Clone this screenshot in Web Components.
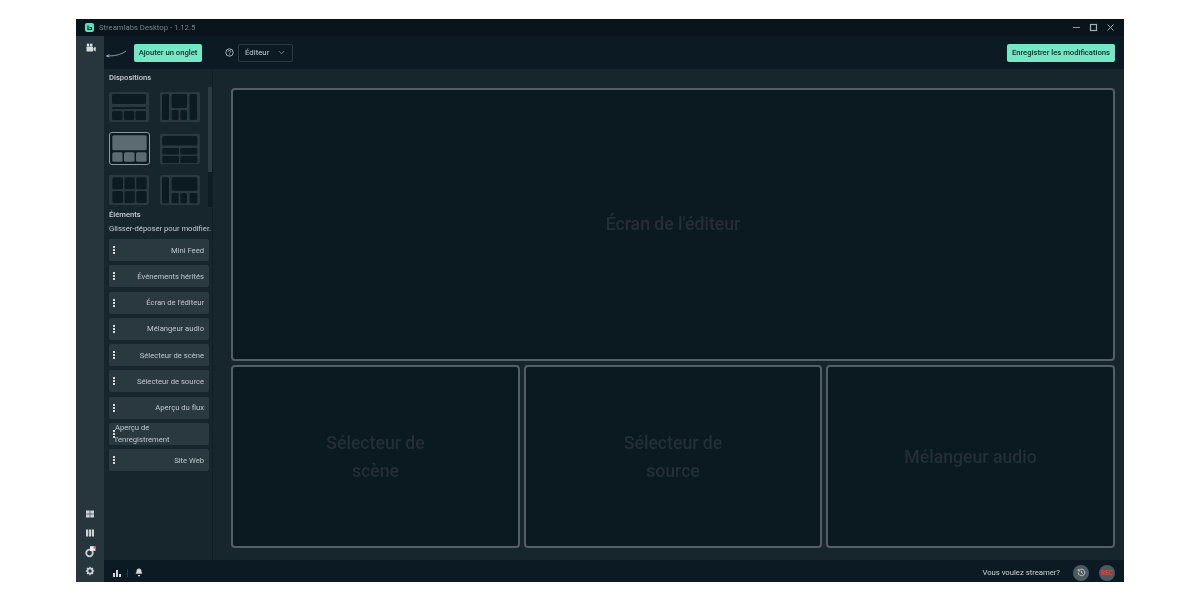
<!DOCTYPE html>
<html lang="fr">
<head>
<meta charset="utf-8">
<title>Streamlabs Desktop</title>
<style>
  html, body { margin: 0; background: #fff; }
  body { height: 600px; overflow: hidden; font-family: Roboto, "Liberation Sans", sans-serif; }
</style>
</head>
<body>
<app-window>
  <title-bar slot="title"></title-bar>
  <side-nav slot="nav"></side-nav>
  <editor-toolbar slot="toolbar"></editor-toolbar>
  <layout-panel slot="panel">
    <layout-thumb cells="3,2,34,10;3,15,34,2;3,19,10.500,9;14.800,19,10.500,9;26.500,19,10.500,9"></layout-thumb>
    <layout-thumb cells="2,2,7,26;11.600,2,15.400,14;29.600,2,7.400,26;11.600,18,7,10;20.400,18,6.600,10"></layout-thumb>
    <layout-thumb selected cells="3.300,3.300,34.400,15;3.300,20.300,10.300,9.500;15,20.300,10.600,9.500;27,20.300,10.600,9.500"></layout-thumb>
    <layout-thumb middle cells="2.300,2,35,9.500;2.300,14,16.700,6.500;20.300,14,17,6.500;2.300,22,16.700,7;20.300,22,17,7"></layout-thumb>
    <layout-thumb cells="3.400,2.300,10.600,12;15.500,2.300,10.300,12;27.300,2.300,10.300,12;3.400,16,10.600,12;15.500,16,10.300,12;27.300,16,10.300,12"></layout-thumb>
    <layout-thumb cells="2,2.300,7,26;11.600,2.300,25.700,13.500;11.600,18,7,10.300;20.400,18,6.600,10.300;29.600,18,7.700,10.300"></layout-thumb>
    <element-row slot="rows">Mini Feed</element-row>
    <element-row slot="rows">Événements hérités</element-row>
    <element-row slot="rows">Écran de l'éditeur</element-row>
    <element-row slot="rows">Mélangeur audio</element-row>
    <element-row slot="rows">Sélecteur de scène</element-row>
    <element-row slot="rows">Sélecteur de source</element-row>
    <element-row slot="rows">Aperçu du flux</element-row>
    <element-row slot="rows" wrap>Aperçu de l'enregistrement</element-row>
    <element-row slot="rows">Site Web</element-row>
  </layout-panel>
  <editor-grid slot="main">
    <editor-slot style="grid-column: 1 / 4">Écran de l'éditeur</editor-slot>
    <editor-slot narrow>Sélecteur de scène</editor-slot>
    <editor-slot narrow>Sélecteur de source</editor-slot>
    <editor-slot>Mélangeur audio</editor-slot>
  </editor-grid>
  <status-bar slot="status"></status-bar>
</app-window>

<script>
// petit helper: chaque composant pose son html dans un shadow root ouvert
class Base extends HTMLElement {
  constructor() {
    super();
    this.attachShadow({ mode: 'open' });
  }
  connectedCallback() {
    this.shadowRoot.innerHTML = this.render();
  }
}

class AppWindow extends Base {
  render() {
    return `
      <style>
        :host { display: block; padding: 19px 76px 18px; height: 563px; }
        .win {
          height: 563px; display: grid;
          grid-template-columns: 28px 109px 1fr;
          grid-template-rows: 17px 33px 491px 22px;
          grid-template-areas: "t t t" "n b b" "n p m" "n s s";
          background: #17252d;
          filter: blur(.35px); /* la capture est un peu floue, et le texte reste gris */
        }
        ::slotted([slot=title]) { grid-area: t; }
        ::slotted([slot=nav]) { grid-area: n; }
        ::slotted([slot=toolbar]) { grid-area: b; }
        ::slotted([slot=panel]) { grid-area: p; }
        ::slotted([slot=main]) { grid-area: m; }
        ::slotted([slot=status]) { grid-area: s; }
      </style>
      <div class="win">
        <slot name="title"></slot><slot name="nav"></slot><slot name="toolbar"></slot>
        <slot name="panel"></slot><slot name="main"></slot><slot name="status"></slot>
      </div>`;
  }
}

class TitleBar extends Base {
  render() {
    return `
      <style>
        :host { display: flex; align-items: center; background: #09141b; color: #75838a; font-size: 7.700px; padding: 0 9px; }
        .logo { width: 9px; height: 9px; margin-right: 5px; }
        .name { flex: 1; }
        .ctl { display: flex; gap: 8px; }
        svg { display: block; }
      </style>
      <svg class="logo" viewBox="0 0 9 9"><rect width="9" height="9" rx="2" fill="#5fe0bd"/><path d="M3 2.500v4h3.500v-2H4.500" fill="none" stroke="#0c1a21" stroke-width="1.100"/></svg>
      <span class="name">Streamlabs Desktop - 1.12.5</span>
      <div class="ctl">
        <svg width="9" height="9" viewBox="0 0 9 9"><path d="M1 4.500h7" stroke="#8b979d"/></svg>
        <svg width="9" height="9" viewBox="0 0 9 9"><rect x="1.500" y="1.500" width="6" height="6" fill="none" stroke="#a3aeb3" stroke-width="1.200"/></svg>
        <svg width="9" height="9" viewBox="0 0 9 9"><path d="M1.500 1.500l6 6M7.500 1.500l-6 6" stroke="#a3aeb3"/></svg>
      </div>`;
  }
}

class SideNav extends Base {
  render() {
    return `
      <style>
        :host { display: flex; flex-direction: column; justify-content: space-between; align-items: center; background: #27353d; padding: 7px 0 6px; box-sizing: border-box; }
        .low { display: flex; flex-direction: column; align-items: center; gap: 9px; }
        svg { display: block; width: 10px; height: 10px; }
      </style>
      <svg viewBox="0 0 10 10" style="margin-left:1px"><g fill="#d5dcdf"><circle cx="2" cy="2" r="1.400"/><circle cx="5.200" cy="2" r="1.400"/><rect x="0.500" y="3.600" width="6.500" height="5" rx=".6"/><path d="M7.500 5l2.200-1.200v4.600L7.500 7.200z"/></g></svg>
      <div class="low">
        <svg viewBox="0 0 10 10"><g fill="#c9d1d5"><rect x="1" y="1.500" width="3.700" height="3.200"/><rect x="5.300" y="1.500" width="3.700" height="3.200"/><rect x="1" y="5.300" width="3.700" height="3.200"/><rect x="5.300" y="5.300" width="3.700" height="3.200"/></g></svg>
        <svg viewBox="0 0 10 10"><g fill="#c9d1d5"><rect x="1" y="1.500" width="2.200" height="7"/><rect x="3.900" y="1.500" width="2.200" height="7"/><rect x="6.800" y="1.500" width="2.200" height="7"/></g></svg>
        <svg viewBox="0 0 10 10" style="overflow:visible"><circle cx="4.500" cy="6" r="3.300" fill="none" stroke="#c9d1d5" stroke-width="1.800"/><rect x="5" y="-.8" width="5.500" height="4.600" fill="#eceff0"/><rect x="8.800" y="-.8" width="1.700" height="2.400" fill="#d8434c"/></svg>
        <svg viewBox="0 0 10 10"><circle cx="5" cy="5" r="2.600" fill="none" stroke="#c9d1d5" stroke-width="1.800"/><path d="M5 .8v1.400M5 7.800v1.400M.8 5h1.400M7.800 5h1.400M2 2l1 1M7 7l1 1M8 2L7 3M3 7L2 8" stroke="#c9d1d5" stroke-width="1.200"/></svg>
      </div>`;
  }
}

class EditorToolbar extends Base {
  render() {
    return `
      <style>
        :host { display: flex; align-items: center; background: #0c1b23; padding: 0 9px 0 1px; }
        .arrow { width: 22px; height: 12px; margin-right: 7px; flex: none; margin-top: 2px; }
        .btn { background: #74e8c5; color: #0e2a2a; font-size: 7.650px; font-weight: 500; height: 18px; line-height: 18px; border-radius: 2px; padding: 0 5px; white-space: nowrap; }
        .add { width: 68px; padding: 0; text-align: center; }
        .help { margin: 0 4px 0 23px; width: 9px; height: 9px; display: block; }
        .select { width: 55px; height: 18px; box-sizing: border-box; border: 1px solid #2b3a42; border-radius: 2px; color: #c3ced3; font-size: 7.800px; display: flex; align-items: center; justify-content: space-between; padding: 0 7px 0 6px; }
        .sp { flex: 1; }
      </style>
      <svg class="arrow" viewBox="0 0 22 12"><path d="M21 3C16 7 9 8 1.500 8M1.500 8l3-1.500M1.500 8l3 1" fill="none" stroke="#aab6bb" stroke-width=".8"/></svg>
      <div class="btn add">Ajouter un onglet</div>
      <svg class="help" viewBox="0 0 9 9"><circle cx="4.500" cy="4.500" r="3.700" fill="none" stroke="#b6c1c6" stroke-width=".9"/><path d="M3.300 3.600a1.200 1.200 0 1 1 1.600 1.100c-.3.2-.4.3-.4.7M4.500 6.300v.6" fill="none" stroke="#b6c1c6" stroke-width=".8"/></svg>
      <div class="select"><span>Éditeur</span><svg width="7" height="5" viewBox="0 0 7 5"><path d="M.8 1l2.700 2.800L6.200 1" fill="none" stroke="#7f8d93" stroke-width=".8"/></svg></div>
      <div class="sp"></div>
      <div class="btn">Enregistrer les modifications</div>`;
  }
}

class LayoutPanel extends Base {
  render() {
    return `
      <style>
        :host { display: flex; flex-direction: column; box-sizing: border-box; position: relative; border-right: 1px solid #101e26; padding: 0 3px 0 5px; color: #c5d0d5; font-size: 7.650px; min-height: 0; }
        h3 { margin: 0; font: 500 7.600px/10px Roboto, "Liberation Sans", sans-serif; color: #c5d0d5; }
        .head { padding-top: 4px; height: 18px; box-sizing: border-box; }
        .thumbs { display: grid; grid-template-columns: 41px 40px; column-gap: 10px; row-gap: 10px; height: 120px; padding-top: 5px; box-sizing: border-box; align-content: start; }
        .elems { padding-top: 3px; height: 32px; box-sizing: border-box; }
        p { margin: 3px 0 0; line-height: 12px; white-space: nowrap; color: #c0cbd0; }
        .rows { display: flex; flex-direction: column; gap: 4.300px; }
        .track { position: absolute; right: 0; top: 18px; width: 4px; height: 120px; background: #0e1c24; }
        .thumb { position: absolute; left: 0; top: 0; width: 4px; height: 85px; background: #2d3b43; }
      </style>
      <div class="head"><h3>Dispositions</h3></div>
      <div class="thumbs"><slot></slot></div>
      <div class="track"><div class="thumb"></div></div>
      <div class="elems"><h3>Éléments</h3><p>Glisser-déposer pour modifier.</p></div>
      <div class="rows"><slot name="rows"></slot></div>`;
  }
}

class LayoutThumb extends Base {
  render() {
    const sel = this.hasAttribute('selected');
    const w = sel ? 41 : 40;
    const h = sel ? 33 : 30;
    const cells = (this.getAttribute('cells') || '').split(';').map(c => {
      const [x, y, cw, ch] = c.split(',');
      return `<rect x="${x}" y="${y}" width="${cw}" height="${ch}" rx="1.500" fill="${sel ? '#5c6b72' : '#0c1a21'}"/>`;
    }).join('');
    const frame = sel
      ? `<rect x=".5" y=".5" width="${w - 1}" height="${h - 1}" rx="2.500" fill="#0c1a21" stroke="#8d999e"/>`
      : `<rect width="${w}" height="${h}" rx="2" fill="#2a3840"/>`;
    return `
      <style>
        :host { display: block; width: ${w}px; height: ${h}px; align-self: ${this.hasAttribute('middle') ? 'center' : 'start'}; }
        svg { display: block; }
      </style>
      <svg width="${w}" height="${h}" viewBox="0 0 ${w} ${h}">${frame}${cells}</svg>`;
  }
}

class ElementRow extends Base {
  render() {
    const wrap = this.hasAttribute('wrap');
    return `
      <style>
        :host { display: flex; align-items: center; height: 22px; box-sizing: border-box; background: #2a3840; border-radius: 2px; padding: 0 5px 0 4px; font-size: 7.650px; color: #bcc8cd; }
        .dots { width: 3px; flex: none; display: flex; flex-direction: column; gap: 1px; }
        i { display: block; width: 2.400px; height: 2px; background: #d4dcdf; }
        .txt { flex: 1; text-align: right; white-space: nowrap; }
        .wrap { text-align: left; white-space: normal; line-height: 12px; margin-left: -1px; }
      </style>
      <div class="dots"><i></i><i></i><i></i></div>
      <div class="txt ${wrap ? 'wrap' : ''}"><slot></slot></div>`;
  }
}

class EditorGrid extends Base {
  render() {
    return `
      <style>
        :host { display: grid; grid-template-columns: 289px 298px 289px; grid-template-rows: 273.500px 183px; gap: 4px; padding: 18.500px 9px 12px 18px; box-sizing: border-box; min-width: 0; }
      </style>
      <slot></slot>`;
  }
}

class EditorSlot extends Base {
  render() {
    return `
      <style>
        :host { display: flex; align-items: center; justify-content: center; text-align: center; box-sizing: border-box; background: #0b1920; border: 2px solid #525f66; border-radius: 4px; color: #222f37; font-size: 17.650px; font-weight: 500; line-height: 28px; }
        div { max-width: 130px; }
        .full { max-width: none; }
      </style>
      <div class="${this.hasAttribute('narrow') ? '' : 'full'}"><slot></slot></div>`;
  }
}

class StatusBar extends Base {
  render() {
    return `
      <style>
        :host { display: flex; align-items: center; background: #0c1b23; padding: 3px 9px 0 9px; box-sizing: border-box; color: #c9d3d7; font-size: 7.700px; }
        svg { display: block; }
        .sep { width: 1px; height: 8px; background: #2b3a42; margin: 0 7px 0 6px; }
        .sp { flex: 1; }
        .round { width: 16px; height: 16px; border-radius: 50%; background: #4d5a61; display: flex; align-items: center; justify-content: center; }
        .rec { margin-left: 10px; color: #e5403f; font-size: 6.400px; font-weight: 700; }
        .label { margin-right: 13px; }
      </style>
      <svg width="8" height="8" viewBox="0 0 8 8"><g fill="#cfd7da"><rect y="4" width="2" height="4"/><rect x="3" y="1" width="2" height="7"/><rect x="6" y="5" width="2" height="3"/></g></svg>
      <div class="sep"></div>
      <svg width="8" height="9" viewBox="0 0 8 9"><path d="M4 .5c1.700 0 2.500 1.200 2.500 2.800 0 1.200.5 1.800 1 2.400H.5c.5-.6 1-1.200 1-2.400C1.500 1.700 2.300.5 4 .5zM3 7h2v1.300H3z" fill="#cfd7da"/></svg>
      <div class="sp"></div>
      <span class="label">Vous voulez streamer?</span>
      <div class="round"><svg width="9" height="9" viewBox="0 0 9 9"><path d="M2 2.300A3.300 3.300 0 1 1 1.200 4.500M1.300 1v2h2M4.500 2.800v2l1.300.8" fill="none" stroke="#d3dadd" stroke-width=".8"/></svg></div>
      <div class="round rec">REC</div>`;
  }
}

customElements.define('app-window', AppWindow);
customElements.define('title-bar', TitleBar);
customElements.define('side-nav', SideNav);
customElements.define('editor-toolbar', EditorToolbar);
customElements.define('layout-panel', LayoutPanel);
customElements.define('layout-thumb', LayoutThumb);
customElements.define('element-row', ElementRow);
customElements.define('editor-grid', EditorGrid);
customElements.define('editor-slot', EditorSlot);
customElements.define('status-bar', StatusBar);
</script>
</body>
</html>
